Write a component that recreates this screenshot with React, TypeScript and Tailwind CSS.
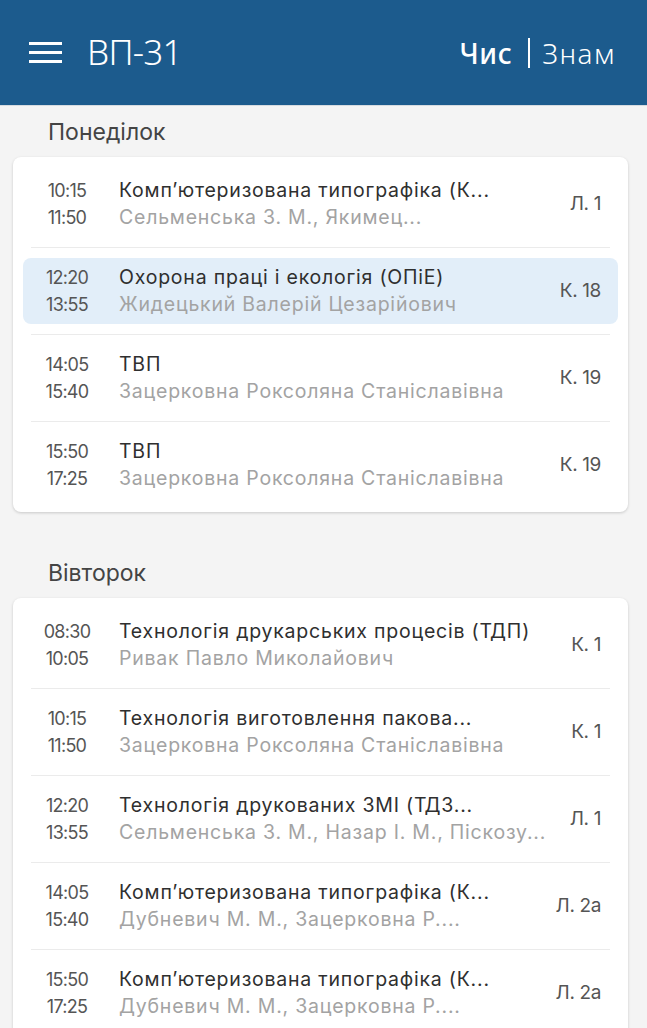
type Lesson = {
  start: string
  end: string
  title: string
  teacher: string
  room: string
  current?: boolean
}

type Day = {
  name: string
  lessons: Lesson[]
}

const days: Day[] = [
  {
    name: 'Понеділок',
    lessons: [
      { start: '10:15', end: '11:50', title: 'Комп’ютеризована типографіка (К...', teacher: 'Сельменська З. М., Якимец...', room: 'Л. 1' },
      { start: '12:20', end: '13:55', title: 'Охорона праці і екологія (ОПіЕ)', teacher: 'Жидецький Валерій Цезарійович', room: 'К. 18', current: true },
      { start: '14:05', end: '15:40', title: 'ТВП', teacher: 'Зацерковна Роксоляна Станіславівна', room: 'К. 19' },
      { start: '15:50', end: '17:25', title: 'ТВП', teacher: 'Зацерковна Роксоляна Станіславівна', room: 'К. 19' },
    ],
  },
  {
    name: 'Вівторок',
    lessons: [
      { start: '08:30', end: '10:05', title: 'Технологія друкарських процесів (ТДП)', teacher: 'Ривак Павло Миколайович', room: 'К. 1' },
      { start: '10:15', end: '11:50', title: 'Технологія виготовлення пакова...', teacher: 'Зацерковна Роксоляна Станіславівна', room: 'К. 1' },
      { start: '12:20', end: '13:55', title: 'Технологія друкованих ЗМІ (ТДЗ...', teacher: 'Сельменська З. М., Назар І. М., Піскозу...', room: 'Л. 1' },
      { start: '14:05', end: '15:40', title: 'Комп’ютеризована типографіка (К...', teacher: 'Дубневич М. М., Зацерковна Р....', room: 'Л. 2а' },
      { start: '15:50', end: '17:25', title: 'Комп’ютеризована типографіка (К...', teacher: 'Дубневич М. М., Зацерковна Р....', room: 'Л. 2а' },
    ],
  },
]

// рядок однієї пари
function LessonRow({ lesson }: { lesson: Lesson }) {
  return (
    <div
      className={
        lesson.current
          ? 'flex h-[66px] items-center rounded-lg bg-[#e2eef9] pr-[17px]'
          : 'flex h-[66px] items-center rounded-lg pr-[17px]'
      }
    >
      <div className="flex w-[88px] shrink-0 flex-col items-center text-[18px] leading-[27px] tracking-[-0.04em] text-[#555]">
        <span>{lesson.start}</span>
        <span>{lesson.end}</span>
      </div>
      <div className="flex min-w-0 flex-1 flex-col pl-[8px] leading-[27px]">
        <span className="whitespace-nowrap text-[19.5px] tracking-[0.04em] text-[#2f2f2f]">{lesson.title}</span>
        <span className="whitespace-nowrap text-[19.5px] tracking-[0.04em] text-[#a3a3a3]">{lesson.teacher}</span>
      </div>
      <div className="shrink-0 pl-2 text-[19px] tracking-[-0.02em] text-[#555]">{lesson.room}</div>
    </div>
  )
}

function DaySection({ day }: { day: Day }) {
  return (
    <section className="mb-[41px]">
      <h2 className="flex h-[40px] items-center pl-[48px] text-[23px] text-[#444]">{day.name}</h2>
      <div className="ml-[13px] mr-[19px] mt-[5px] rounded-lg bg-white px-[10px] py-[14px] shadow-[0_1px_3px_rgba(0,0,0,0.18)]">
        {day.lessons.map((l, i) => (
          <div key={i}>
            {i > 0 && <div className="mx-[8px] my-[10px] h-px bg-[#ebebeb]" />}
            <LessonRow lesson={l} />
          </div>
        ))}
      </div>
    </section>
  )
}

export default function App() {
  return (
    <div className="flex h-[1028px] w-[647px] flex-col overflow-hidden bg-[#f4f4f4] font-['Inter',sans-serif]">
      <header className="flex h-[105px] shrink-0 items-center justify-between bg-[#1c5b8d] pl-[29px] pr-[31px] font-['Noto_Sans',sans-serif] text-white">
        <div className="flex items-center">
          <div className="flex w-[33px] flex-col gap-[6px]">
            <span className="h-[3px] bg-white" />
            <span className="h-[3px] bg-white" />
            <span className="h-[3px] bg-white" />
          </div>
          <span className="ml-[25px] text-[35px] font-light tracking-[-0.02em]">ВП-31</span>
        </div>
        <div className="flex items-center text-[28px]">
          <span className="font-medium tracking-[0.02em]">Чис</span>
          <span className="ml-[16px] mr-[12px] h-[30px] w-[2px] bg-white" />
          <span className="font-light tracking-[0.05em]">Знам</span>
        </div>
      </header>
      <div className="border-t border-[#d6dbe0] pt-[6px]">
        {days.map((d) => (
          <DaySection key={d.name} day={d} />
        ))}
      </div>
    </div>
  )
}
